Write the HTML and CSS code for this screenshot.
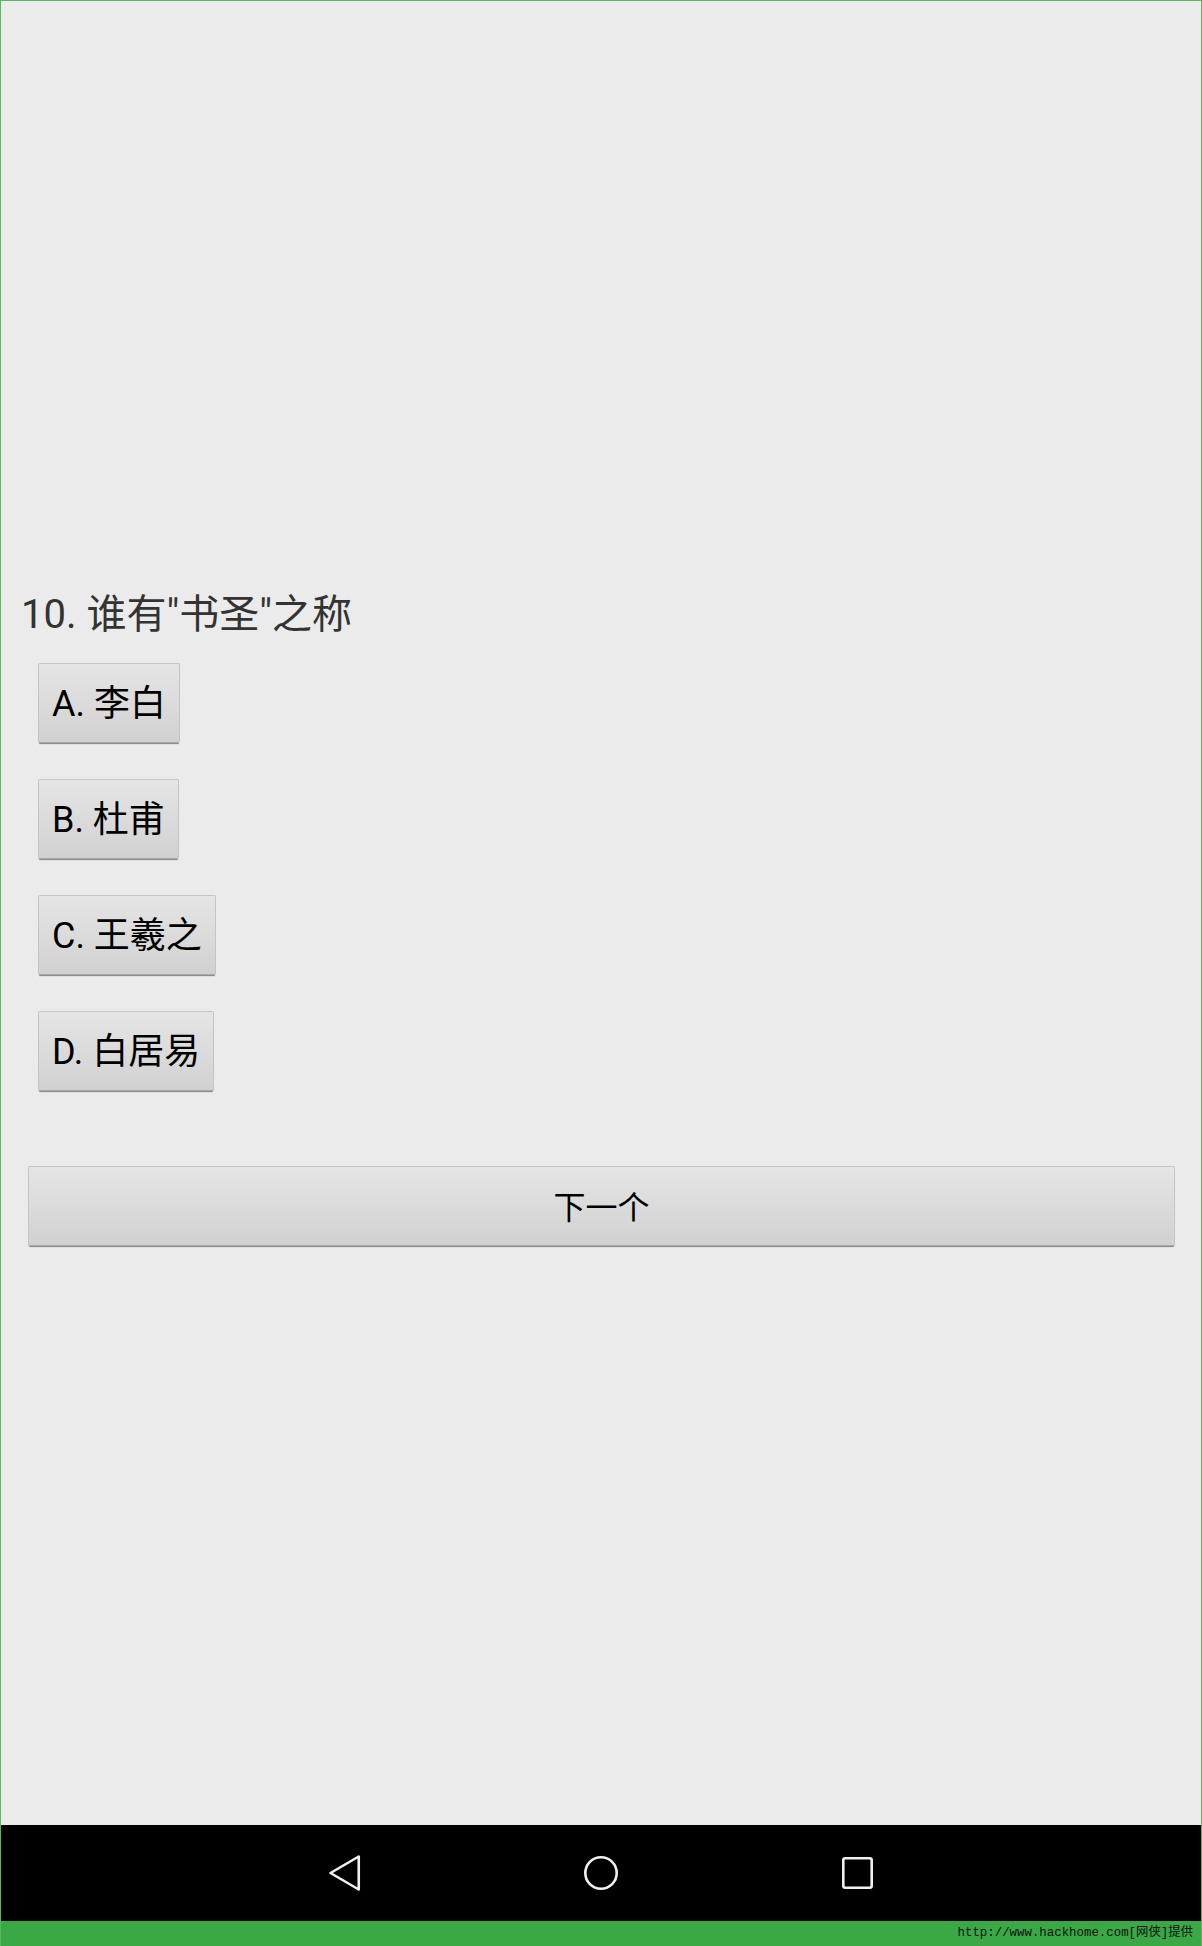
FILE: index.html
```html
<!DOCTYPE html>
<html>
<head>
    <meta charset="utf-8">
    <title>诗词问答</title>
    <link rel="stylesheet" href="styles.css">
</head>
<body>
    <div class="screen">
        <div class="content">
            <p class="question">10. 谁有"书圣"之称</p>
            <div class="options">
                <button class="opt" type="button">A. 李白</button>
                <button class="opt" type="button">B. 杜甫</button>
                <button class="opt" type="button">C. 王羲之</button>
                <button class="opt" type="button">D. 白居易</button>
            </div>
            <button class="next" type="button">下一个</button>
        </div>
        <div class="navbar">
            <span class="navkey">
                <svg width="40" height="40" viewBox="0 0 40 40"><path d="M33.75 3.5 L33.75 36.5 L5.5 20 Z" fill="none" stroke="#f0f0f0" stroke-width="2.6" stroke-linejoin="round"/></svg>
            </span>
            <span class="navkey">
                <svg width="40" height="40" viewBox="0 0 40 40"><circle cx="20" cy="20" r="15.7" fill="none" stroke="#f0f0f0" stroke-width="2.6"/></svg>
            </span>
            <span class="navkey">
                <svg width="40" height="40" viewBox="0 0 40 40"><rect x="6.3" y="5.3" width="28.4" height="29.4" rx="2" fill="none" stroke="#f0f0f0" stroke-width="2.6"/></svg>
            </span>
        </div>
        <div class="credit">http://www.hackhome.com[网侠]提供</div>
    </div>
</body>
</html>
```

FILE: styles.css
```css
body {
    margin: 0;
    background: #ebebeb;
}

.screen {
    width: 1202px;
    height: 1946px;
    box-sizing: border-box;
    border: 1px solid #5cb85f;
    border-bottom: 0;
    display: flex;
    flex-direction: column;
    background: #ebebeb;
}

.content {
    flex: 1;
    display: flex;
    flex-direction: column;
    align-items: flex-start;
}

.question {
    margin: 590px 0 0 20px;
    font-family: Roboto, "Noto Sans CJK SC", sans-serif;
    font-size: 40px;
    line-height: 48px;
    color: #333;
}

.options {
    margin: 24px 0 0 37px;
    display: flex;
    flex-direction: column;
    align-items: flex-start;
    gap: 36px;
}

.opt,
.next {
    box-sizing: border-box;
    height: 80px;
    margin: 0;
    border: 1px solid #c4c4c4;
    border-bottom-color: #a9a9a9;
    border-radius: 2px;
    background: linear-gradient(#e5e5e5, #d1d1d1);
    box-shadow: 0 2px 1px -1px rgba(0, 0, 0, 0.45);
    font-family: Roboto, "Noto Sans CJK SC", sans-serif;
    font-size: 36px;
    line-height: 80px;
    color: #000;
}

.opt {
    padding: 0 13px;
}

.next {
    width: 1147px;
    margin: 75px 0 0 27px;
    padding: 0;
    text-align: center;
    font-size: 32px;
    line-height: 82px;
}

.navbar {
    height: 96px;
    background: #000;
    display: flex;
    justify-content: center;
    align-items: center;
    gap: 160px;
}

.navkey {
    width: 96px;
    display: flex;
    justify-content: center;
}

.navkey svg {
    display: block;
}

.credit {
    height: 25px;
    background: #39a845;
    padding-right: 8px;
    text-align: right;
    font-family: "Liberation Mono", "Noto Sans CJK SC", monospace;
    font-size: 12.4px;
    line-height: 25px;
    color: #111;
}
```
